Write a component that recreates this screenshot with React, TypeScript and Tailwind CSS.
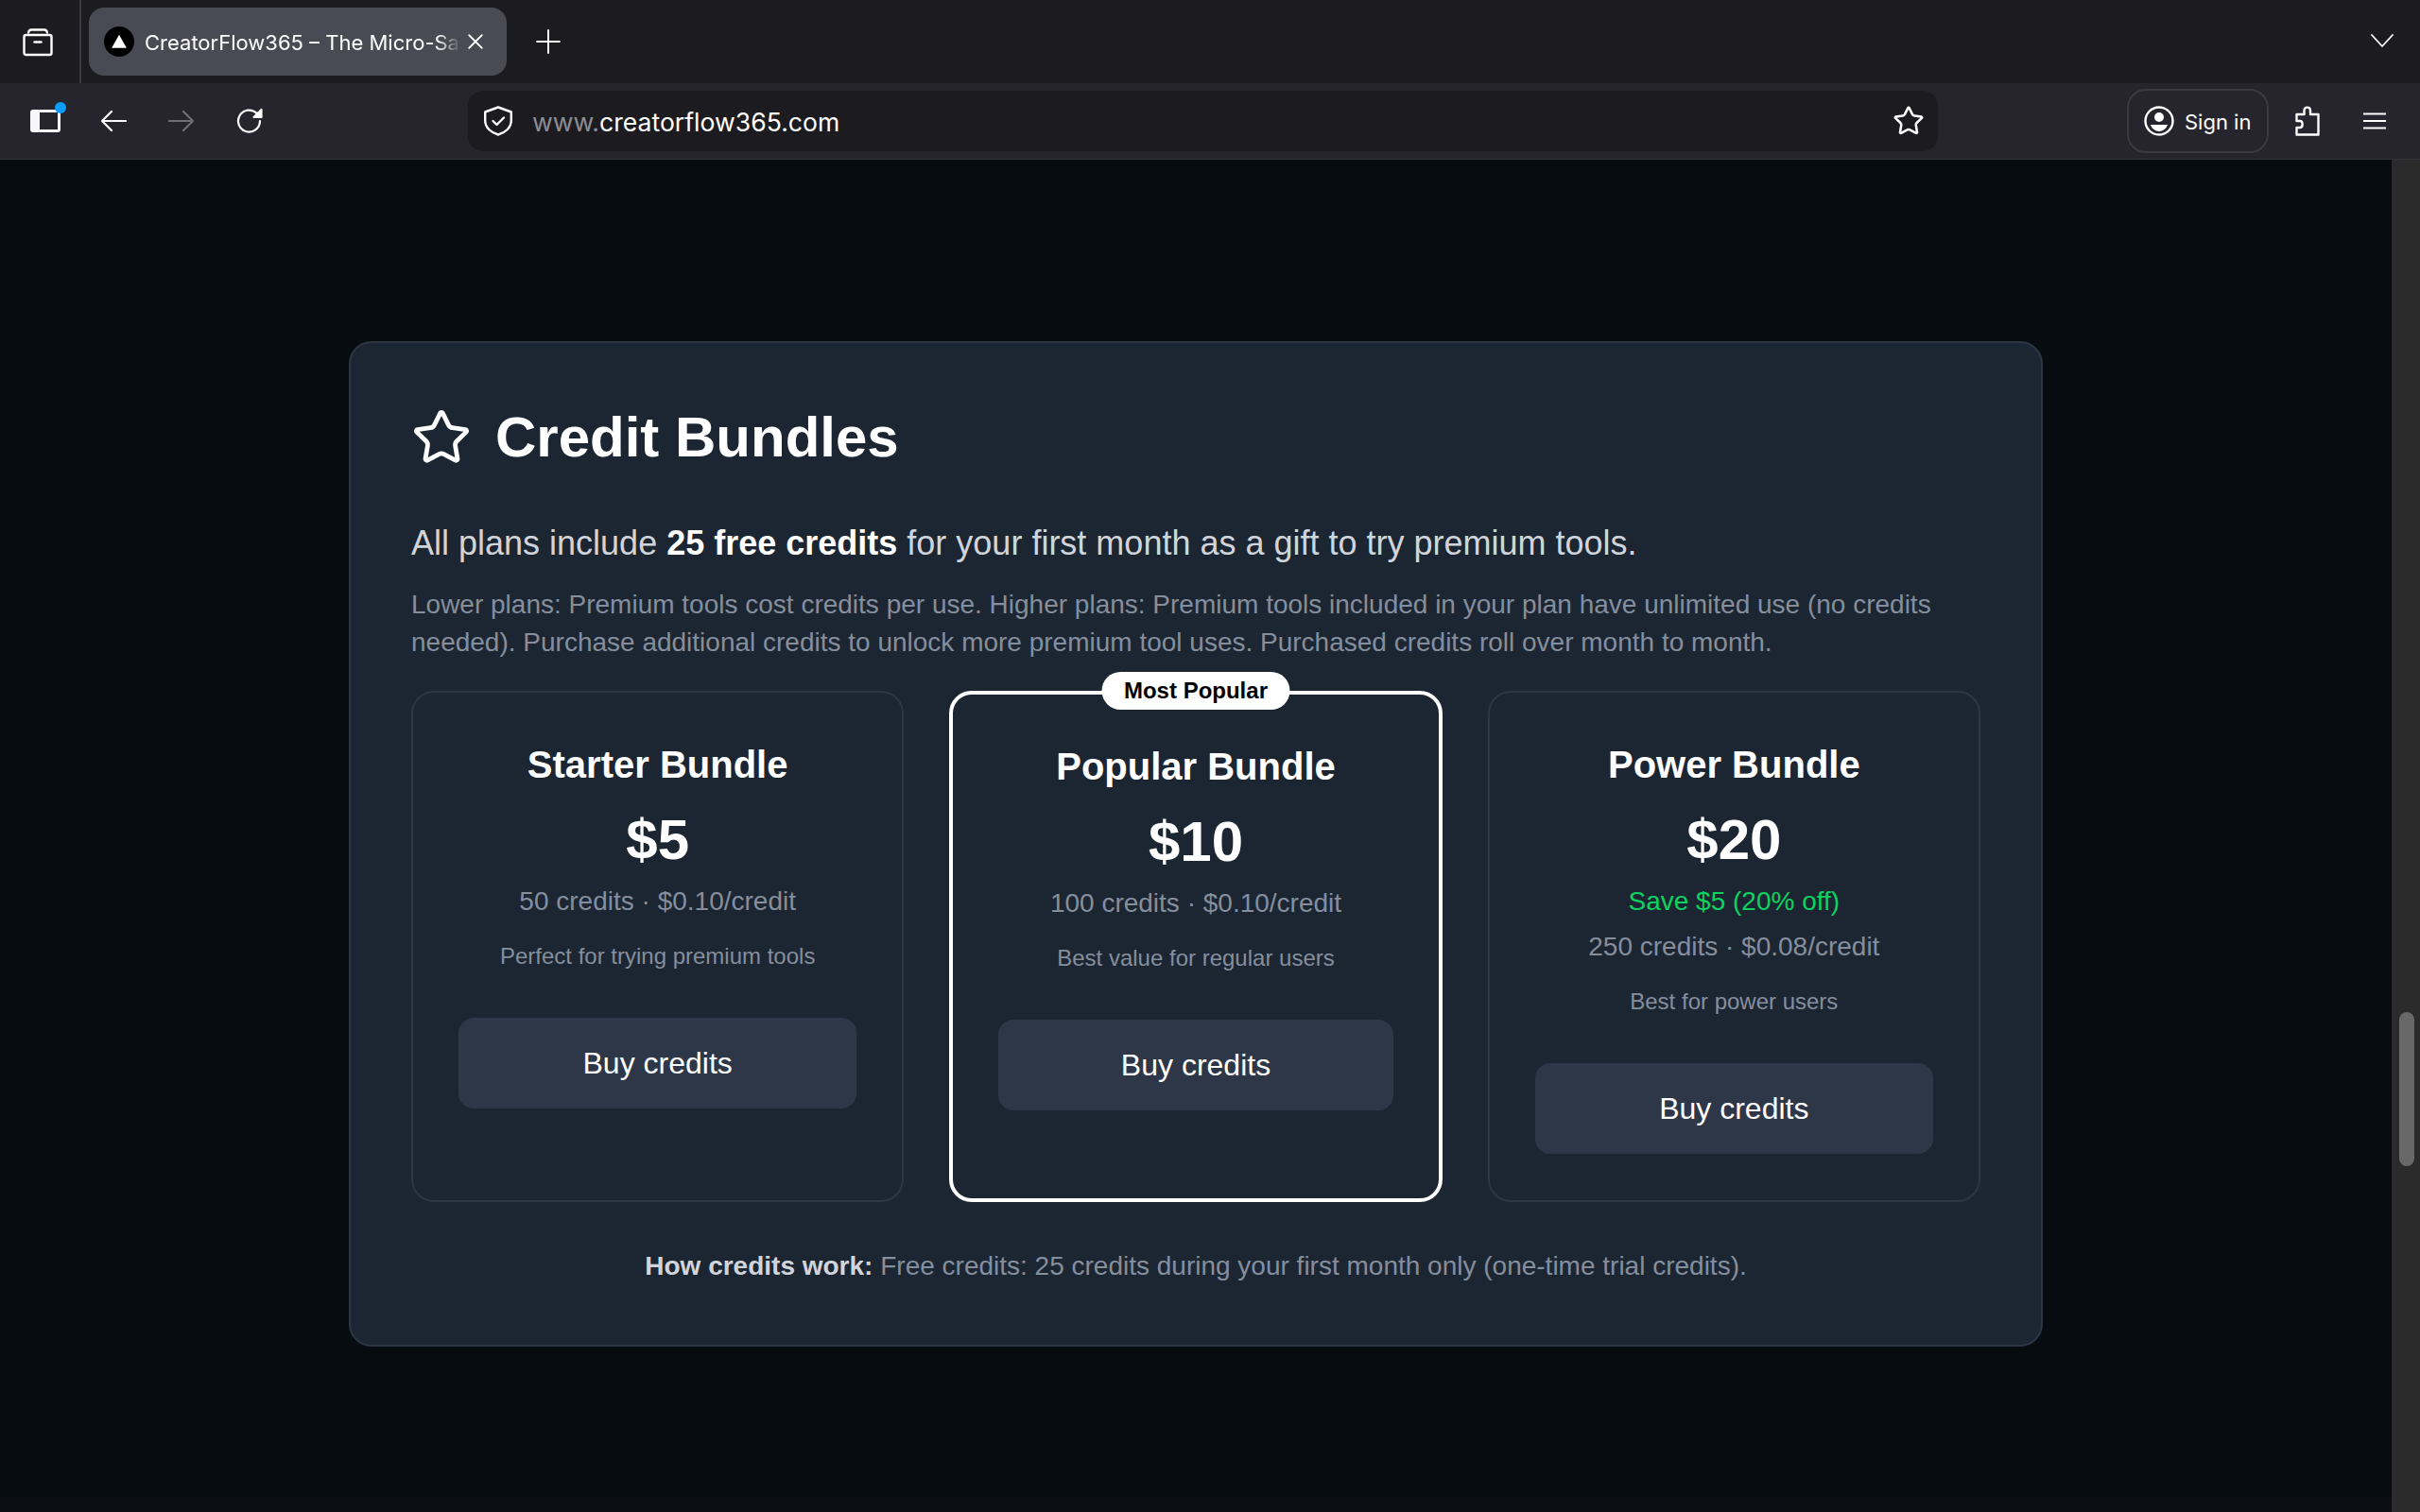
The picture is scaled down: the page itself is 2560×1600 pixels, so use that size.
import React from "react";

const Star = ({ className, sw = 2 }: { className: string; sw?: number }) => (
  <svg viewBox="0 0 24 24" fill="none" stroke="currentColor" strokeWidth={sw} strokeLinecap="round" strokeLinejoin="round" className={className}>
    <path d="M11.525 2.295a.53.53 0 0 1 .95 0l2.31 4.679a2.123 2.123 0 0 0 1.595 1.16l5.166.756a.53.53 0 0 1 .294.904l-3.736 3.638a2.123 2.123 0 0 0-.611 1.878l.882 5.14a.53.53 0 0 1-.771.56l-4.618-2.428a2.122 2.122 0 0 0-1.973 0L6.396 21.01a.53.53 0 0 1-.77-.56l.881-5.139a2.122 2.122 0 0 0-.611-1.879L2.16 9.795a.53.53 0 0 1 .294-.906l5.165-.755a2.122 2.122 0 0 0 1.597-1.16z" />
  </svg>
);

function Bundle({ title, price, save, credits, note, popular }: { title: string; price: string; save?: string; credits: string; note: string; popular?: boolean }) {
  return (
    <div className={popular ? "relative flex flex-col items-center rounded-[24px] border-4 border-white px-12 pt-[48px] pb-12" : "relative flex flex-col items-center rounded-[24px] border-2 border-[#2c3645] px-12 pt-[48px] pb-12"}>
      {popular && (
        <div className="absolute -top-[24px] left-1/2 -translate-x-1/2 h-10 w-[199px] rounded-full bg-white text-black text-[24px] leading-10 font-bold text-center">Most Popular</div>
      )}
      <div className="text-[40px] leading-[56px] font-bold text-white">{title}</div>
      <div className="mt-[16px] text-[60px] leading-[72px] font-bold text-white">{price}</div>
      {save && <div className="mt-[9px] text-[28px] leading-10 text-[#0cd35f]">{save}</div>}
      <div className={save ? "mt-[8px] text-[28px] leading-10 text-[#858e9d]" : "mt-[9px] text-[28px] leading-10 text-[#858e9d]"}>{credits}</div>
      <div className="mt-[22px] text-[24px] leading-8 text-[#858e9d]">{note}</div>
      <div className="mt-[49px] w-full h-24 rounded-[16px] bg-[#2e3748] flex items-center justify-center text-[32px] text-white">Buy credits</div>
    </div>
  );
}

export default function App() {
  return (
    <div className="w-[2560px] h-[1600px] overflow-hidden flex flex-col bg-[#070c11] font-['Liberation_Sans',sans-serif]">
      {/* tab strip */}
      <div className="h-[88px] bg-[#1b1b20] flex items-center text-white font-['Inter',sans-serif] relative">
        <svg viewBox="0 0 32 32" fill="none" stroke="currentColor" strokeWidth={2.4} strokeLinecap="round" strokeLinejoin="round" className="ml-[24px] w-8 h-8">
          <path d="M6 6.500c.5-2 1.500-3 3-3h14c1.500 0 2.500 1 3 3" />
          <rect x="1.500" y="9" width="29" height="21" rx="2" />
          <path d="M12.500 16.500h7" />
        </svg>
        <div className="ml-[28px] w-[2px] h-full bg-[#3a3a40]" />
        <div className="ml-[8px] w-[442px] h-[72px] rounded-[16px] bg-[#4a4a55] flex items-center pl-[16px]">
          <div className="w-8 h-8 rounded-full bg-black flex items-center justify-center">
            <svg viewBox="0 0 16 16" className="w-[18px] h-[18px]"><path d="M8 1.500 15 14H1z" fill="#fff" /></svg>
          </div>
          <div className="ml-[11px] pt-[2px] w-[335px] overflow-hidden whitespace-nowrap text-[22px] [mask-image:linear-gradient(to_right,#000_92%,transparent)]">CreatorFlow365 – The Micro-SaaS Platform</div>
          <svg viewBox="0 0 16 16" stroke="currentColor" strokeWidth={1.6} strokeLinecap="round" className="ml-[6px] w-[18px] h-[18px]"><path d="M2 2l12 12M14 2 2 14" /></svg>
        </div>
        <svg viewBox="0 0 24 24" stroke="currentColor" strokeWidth={1.8} strokeLinecap="round" className="ml-[31px] w-[26px] h-[26px]"><path d="M12 1v22M1 12h22" /></svg>
        <svg viewBox="0 0 24 14" fill="none" stroke="currentColor" strokeWidth={1.800} strokeLinecap="round" strokeLinejoin="round" className="absolute right-[28px] top-[36px] w-[24px] h-[14px]"><path d="M1 1l11 12L23 1" /></svg>
      </div>
      {/* toolbar */}
      <div className="h-[81px] bg-[#26252d] border-b border-[#35353c] flex items-center text-white font-['Inter',sans-serif]">
        <div className="relative ml-[32px] w-8 h-6">
          <div className="w-8 h-6 rounded-[3px] border-[3px] border-[#f6f6fb] border-l-[10px]" />
          <div className="absolute -top-[8px] -right-[6px] w-3 h-3 rounded-full bg-[#0a9dff]" />
        </div>
        <svg viewBox="0 0 28 24" fill="none" stroke="currentColor" strokeWidth={2.2} strokeLinecap="round" strokeLinejoin="round" className="ml-[42px] w-[28px] h-6"><path d="M27 12H2M12 2 2 12l10 10" /></svg>
        <svg viewBox="0 0 28 24" fill="none" stroke="#6f6e75" strokeWidth={2.2} strokeLinecap="round" strokeLinejoin="round" className="ml-[44px] w-[28px] h-6"><path d="M1 12h25M16 2l10 10-10 10" /></svg>
        <svg viewBox="0 0 28 28" fill="none" stroke="currentColor" strokeWidth={2.200} strokeLinecap="round" strokeLinejoin="round" className="ml-[44px] w-[28px] h-[28px]"><path d="M25 14a11.500 11.500 0 1 1-3.500-8.200L26 9" /><path d="M26.500 2v8h-8z" fill="currentColor" /></svg>
        <div className="ml-[217px] w-[1555px] h-16 rounded-[16px] bg-[#1b1b20] flex items-center pl-[17px]">
          <svg viewBox="0 0 30 32" fill="none" stroke="currentColor" strokeWidth={2.4} strokeLinecap="round" strokeLinejoin="round" className="w-[30px] h-8"><path d="M15 1.500 28.800 6.500v9c0 8-6.800 13-13.800 15-7-2-13.800-7-13.800-15v-9z" /><path d="m9.500 16 4 4L21 12.500" /></svg>
          <div className="ml-[21px] pt-[2px] text-[26.6px] leading-10 whitespace-nowrap"><span className="text-[#8e8d94]">www.</span>creatorflow365.com</div>
          <div className="flex-1" />
          <Star className="w-[34px] h-[34px] mr-[14px]" sw={1.8} />
        </div>
        <div className="ml-[200px] w-[150px] h-[68px] rounded-[20px] border-2 border-[#3a3a42] flex items-center pl-[16px]">
          <svg viewBox="0 0 32 32" className="w-8 h-8"><circle cx="16" cy="16" r="14.500" fill="none" stroke="#fff" strokeWidth="2.400" /><circle cx="16" cy="12" r="5" fill="#fff" /><path d="M7 20h18c-1 4-5 7-9 7s-8-3-9-7z" fill="#fff" /></svg>
          <span className="ml-[11px] pt-[2px] text-[22px] whitespace-nowrap">Sign in</span>
        </div>
        <svg viewBox="0 0 26 32" fill="none" stroke="currentColor" strokeWidth={2.400} strokeLinejoin="round" className="ml-[28px] w-[26px] h-8"><path d="M1.500 9h8V5c0-4.500 6.500-4.500 6.500 0v4h8.500v21.500h-23V23h3.500c3.500 0 3.500-7 0-7H1.500z" /></svg>
        <svg viewBox="0 0 24 18" stroke="currentColor" strokeWidth={2.200} className="ml-[46px] w-6 h-[18px]"><path d="M0 1.500h24M0 9h24M0 16.500h24" /></svg>
      </div>
      {/* page */}
      <div className="flex-1 flex min-h-0">
        <div className="flex-1 flex flex-col min-w-0">
          <div className="flex-1 pt-[192px]">
            <div className="mx-auto w-[1792px] h-[1064px] rounded-[24px] border-2 border-[#2c3645] bg-[#1c2633] px-[64px] pt-[60px]">
              <div className="flex items-center text-white">
                <Star sw={1.8} className="w-[64px] h-[64px]" />
                <h2 className="ml-[25px] text-[60px] leading-[80px] font-bold">Credit Bundles</h2>
              </div>
              <p className="mt-[46px] text-[36px] leading-[52px] text-[#d1d5db]">All plans include <b className="text-white">25 free credits</b> for your first month as a gift to try premium tools.</p>
              <p className="mt-[19px] text-[28px] leading-10 text-[#858e9d]">Lower plans: Premium tools cost credits per use. Higher plans: Premium tools included in your plan have unlimited use (no credits needed). Purchase additional credits to unlock more premium tool uses. Purchased credits roll over month to month.</p>
              <div className="mt-[31px] grid grid-cols-3 gap-12 h-[541px]">
                <Bundle title="Starter Bundle" price="$5" credits="50 credits · $0.10/credit" note="Perfect for trying premium tools" />
                <Bundle popular title="Popular Bundle" price="$10" credits="100 credits · $0.10/credit" note="Best value for regular users" />
                <Bundle title="Power Bundle" price="$20" save="Save $5 (20% off)" credits="250 credits · $0.08/credit" note="Best for power users" />
              </div>
              <p className="mt-[48px] text-center text-[28px] leading-10 text-[#858e9d]"><b className="text-[#d1d5db]">How credits work:</b> Free credits: 25 credits during your first month only (one-time trial credits).</p>
            </div>
          </div>
          <div className="h-4 bg-[#0b0f13]" />
        </div>
        <div className="w-[30px] bg-[#2b2b2b] pt-[902px] pl-[8px]">
          <div className="w-4 h-[163px] rounded-full bg-[#686868]" />
        </div>
      </div>
    </div>
  );
}
